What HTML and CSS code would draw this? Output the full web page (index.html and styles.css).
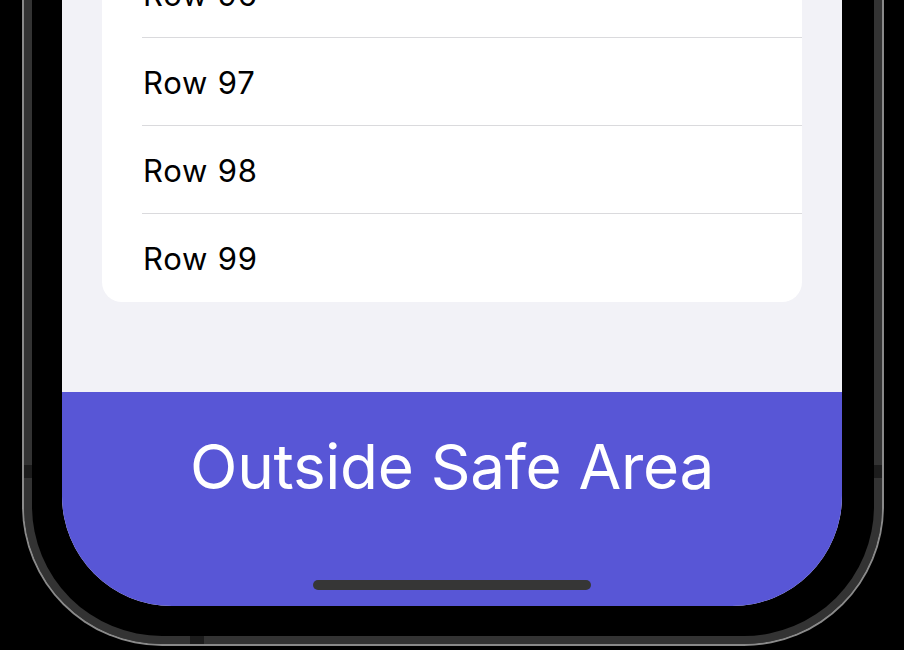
FILE: index.html
```html
<!DOCTYPE html>
<html>
<head>
<meta charset="utf-8">
<link rel="stylesheet" href="styles.css">
</head>
<body>
<div class="device">
  <div class="band">
    <span class="seam seam-left"></span>
    <span class="seam seam-right"></span>
    <span class="seam seam-bottom"></span>
    <div class="bezel">
      <div class="screen">
        <div class="content">
          <div class="card">
            <div class="row"><span>Row 96</span></div>
            <div class="row"><span>Row 97</span></div>
            <div class="row"><span>Row 98</span></div>
            <div class="row"><span>Row 99</span></div>
          </div>
        </div>
        <div class="outside">
          <div class="outside-title">Outside Safe Area</div>
          <div class="home-indicator"></div>
        </div>
      </div>
    </div>
  </div>
</div>
</body>
</html>
```

FILE: styles.css
```css
html, body {
  margin: 0;
  padding: 0;
  background: #000;
  width: 904px;
  height: 650px;
  overflow: hidden;
  font-family: Inter, "Liberation Sans", sans-serif;
}

.device {
  margin-left: 22px;
  width: 858px;
  height: 644px;
  border: 2px solid #8a8a8a;
  border-top: none;
  border-radius: 0 0 140px 140px;
  background: #333;
}

.band {
  position: relative;
  height: 636px;
  border: 8px solid #333;
  border-top: none;
  border-radius: 0 0 138px 138px;
  background: #000;
}

.seam {
  position: absolute;
  background: #1c1c1c;
}
.seam-left {
  left: -8px;
  top: 465px;
  width: 8px;
  height: 13px;
}
.seam-right {
  right: -8px;
  top: 465px;
  width: 8px;
  height: 13px;
}
.seam-bottom {
  left: 158px;
  bottom: -8px;
  width: 14px;
  height: 8px;
}

.bezel {
  height: 606px;
  padding: 0 32px 0 30px;
  border-radius: 0 0 130px 130px;
}

.screen {
  height: 606px;
  display: flex;
  flex-direction: column;
  background: #f2f2f7;
  border-radius: 0 0 110px 110px;
  overflow: hidden;
}

.content {
  height: 392px;
  padding: 0 40px;
  overflow: hidden;
}

.card {
  margin-top: -50px;
  background: #fff;
  border-radius: 0 0 20px 20px;
}

.row {
  height: 88px;
  margin-left: 40px;
  display: flex;
  align-items: center;
  font-size: 31px;
  letter-spacing: 0.8px;
  color: #000;
  box-sizing: border-box;
  border-bottom: 1px solid #dadadd;
}
.row:last-child {
  border-bottom: none;
}
.row span {
  margin-left: 1px;
  margin-top: 1px;
}

.outside {
  flex: 1;
  background: #5856d6;
  display: flex;
  flex-direction: column;
  align-items: center;
}

.outside-title {
  margin-top: 37px;
  font-size: 62px;
  letter-spacing: -0.3px;
  color: #fff;
  line-height: normal;
}

.home-indicator {
  margin-top: auto;
  margin-bottom: 16px;
  width: 278px;
  height: 10px;
  border-radius: 5px;
  background: #363636;
}
```
